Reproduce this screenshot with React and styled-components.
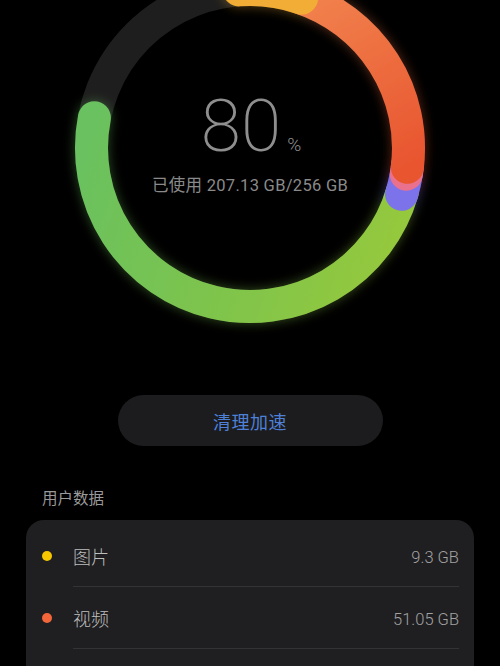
import React from "react";
import styled, { createGlobalStyle } from "styled-components";

const GlobalStyle = createGlobalStyle`
  html, body { margin: 0; padding: 0; background: #000; }
  body {
    font-family: "Roboto", "Noto Sans CJK SC", "Noto Sans", sans-serif;
    -webkit-font-smoothing: antialiased;
  }
  * { box-sizing: border-box; }
`;

const Page = styled.div`
  width: 500px;
  height: 666px;
  background: #000;
  display: flex;
  flex-direction: column;
  overflow: hidden;
`;

const ChartWrap = styled.div`
  position: relative;
  width: 500px;
  height: 340px;
  flex-shrink: 0;
`;

const Ring = styled.svg`
  display: block;
  width: 500px;
  height: 340px;
`;

const Center = styled.div`
  position: absolute;
  left: 0;
  right: 0;
  top: 84px;
  display: flex;
  flex-direction: column;
  align-items: center;
`;

const Percent = styled.div`
  display: flex;
  align-items: baseline;
  color: #8e8e8e;
  padding-left: 2px;
`;

const Big = styled.span`
  font-family: "Roboto", sans-serif;
  font-weight: 200;
  font-size: 73px;
  line-height: 84px;
  letter-spacing: 0px;
`;

const Unit = styled.span`
  font-family: "Roboto", sans-serif;
  font-weight: 300;
  font-size: 19px;
  margin-left: 6px;
`;

const Used = styled.div`
  margin-top: 7px;
  color: #8a8a8a;
  font-size: 16.5px;
  line-height: 22px;
  letter-spacing: 0.3px;
`;

const CleanButton = styled.button`
  align-self: center;
  flex-shrink: 0;
  margin-top: 55px;
  width: 265px;
  height: 51px;
  border: none;
  border-radius: 26px;
  background: #1c1c1e;
  color: #4f80d8;
  font-family: "Noto Sans CJK SC", sans-serif;
  font-size: 18px;
  letter-spacing: 0.5px;
`;

const SectionTitle = styled.div`
  margin: 41px 0 0 42px;
  color: #9a9a9a;
  font-family: "Noto Sans CJK SC", sans-serif;
  font-size: 15.5px;
  line-height: 20px;
`;

const Card = styled.div`
  flex: 1;
  margin: 13px 26px 0;
  padding: 5px 15px 0 16px;
  background: #1f1f21;
  border-radius: 18px 18px 0 0;
`;

const Row = styled.div`
  display: flex;
  align-items: center;
  height: 62px;
`;

const Dot = styled.span`
  width: 10px;
  height: 10px;
  border-radius: 50%;
  background: ${(p) => p.$color};
  flex-shrink: 0;
`;

const RowBody = styled.div`
  flex: 1;
  align-self: stretch;
  margin-left: 21px;
  display: flex;
  align-items: center;
  justify-content: space-between;
  border-bottom: 1px solid #333335;
`;

const Label = styled.span`
  color: #bdbdbd;
  font-family: "Noto Sans CJK SC", sans-serif;
  font-weight: 300;
  font-size: 18px;
`;

const Value = styled.span`
  color: #a2a2a2;
  font-family: "Roboto", sans-serif;
  font-weight: 300;
  font-size: 16.5px;
  padding-top: 4px;
`;

const CX = 250;
const CY = 148;
const R = 158.5;
const SW = 33;

function pt(a) {
  const rad = (a * Math.PI) / 180;
  return [CX + R * Math.sin(rad), CY - R * Math.cos(rad)];
}

function arc(a0, a1) {
  const [x0, y0] = pt(a0);
  const [x1, y1] = pt(a1);
  const large = a1 - a0 > 180 ? 1 : 0;
  return `M ${x0.toFixed(2)} ${y0.toFixed(2)} A ${R} ${R} 0 ${large} 1 ${x1.toFixed(2)} ${y1.toFixed(2)}`;
}

const segments = [
  { from: 106, to: 281, color: "url(#greenGrad)" },
  { from: 99, to: 107, color: "#7b72ea" },
  { from: 96, to: 99.5, color: "#e9718e" },
  { from: 18, to: 97, color: "url(#orangeGrad)" },
  { from: -4, to: 19, color: "#f1ad35" },
];

const rows = [
  { label: "图片", value: "9.3 GB", color: "#f6c700" },
  { label: "视频", value: "51.05 GB", color: "#f2663a" },
];

function StorageRing() {
  return (
    <Ring viewBox="0 0 500 340">
      <defs>
        <linearGradient id="greenGrad" gradientUnits="userSpaceOnUse" x1="80" y1="140" x2="420" y2="250">
          <stop offset="0" stopColor="#69c15f" />
          <stop offset="0.5" stopColor="#7ec44c" />
          <stop offset="1" stopColor="#98c93b" />
        </linearGradient>
        <linearGradient id="orangeGrad" gradientUnits="userSpaceOnUse" x1="300" y1="-10" x2="400" y2="170">
          <stop offset="0" stopColor="#f2844f" />
          <stop offset="1" stopColor="#e8552f" />
        </linearGradient>
        <filter id="glow" x="-20%" y="-20%" width="140%" height="140%">
          <feGaussianBlur in="SourceGraphic" stdDeviation="6" result="b" />
          <feComponentTransfer in="b" result="bf">
            <feFuncA type="linear" slope="0.4" />
          </feComponentTransfer>
          <feMerge>
            <feMergeNode in="bf" />
            <feMergeNode in="SourceGraphic" />
          </feMerge>
        </filter>
      </defs>
      <circle cx={CX} cy={CY} r={R} fill="none" stroke="#1e1e1e" strokeWidth={SW} />
      <g filter="url(#glow)">
        {segments.map((s, i) => (
          <path
            key={i}
            d={arc(s.from, s.to)}
            fill="none"
            stroke={s.color}
            strokeWidth={SW}
            strokeLinecap="round"
          />
        ))}
      </g>
    </Ring>
  );
}

export default function App() {
  return (
    <>
      <GlobalStyle />
      <Page>
        <ChartWrap>
          <StorageRing />
          <Center>
            <Percent>
              <Big>80</Big>
              <Unit>%</Unit>
            </Percent>
            <Used>已使用 207.13 GB/256 GB</Used>
          </Center>
        </ChartWrap>
        <CleanButton>清理加速</CleanButton>
        <SectionTitle>用户数据</SectionTitle>
        <Card>
          {rows.map((r) => (
            <Row key={r.label}>
              <Dot $color={r.color} />
              <RowBody>
                <Label>{r.label}</Label>
                <Value>{r.value}</Value>
              </RowBody>
            </Row>
          ))}
        </Card>
      </Page>
    </>
  );
}
